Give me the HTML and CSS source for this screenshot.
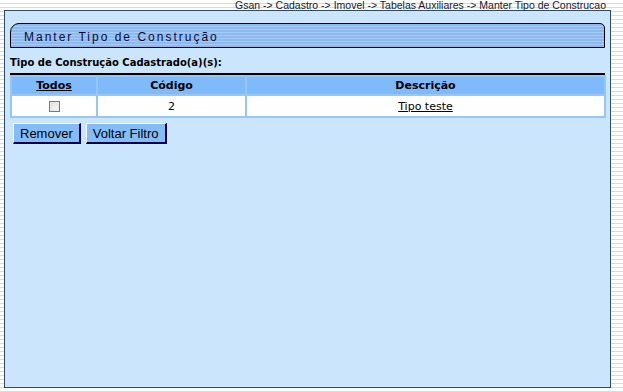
FILE: index.html
```html
<!DOCTYPE html>
<html>
<head>
<meta charset="utf-8">
<link rel="stylesheet" href="styles.css">
</head>
<body>
<div class="crumb">Gsan -&gt; Cadastro -&gt; Imovel -&gt; Tabelas Auxiliares -&gt; Manter Tipo de Construcao</div>
<div class="panel">
  <div class="titlebar"><span class="title">Manter Tipo de Construção</span></div>
  <div class="label">Tipo de Construção Cadastrado(a)(s):</div>
  <div class="rule"></div>
  <table class="grid">
    <tr class="head">
      <th class="c1"><a href="#">Todos</a></th>
      <th class="c2">Código</th>
      <th class="c3">Descrição</th>
    </tr>
    <tr class="row">
      <td><span class="check"></span></td>
      <td>2</td>
      <td><a href="#">Tipo teste</a></td>
    </tr>
  </table>
  <div class="buttons">
    <button class="btn">Remover</button>
    <button class="btn">Voltar Filtro</button>
  </div>
</div>
</body>
</html>
```
FILE: styles.css
```css
html, body {
  margin: 0;
  padding: 0;
}
body {
  width: 623px;
  height: 392px;
  overflow: hidden;
  background: repeating-linear-gradient(to bottom, #ffffff 0, #ffffff 3px, #c2e2f4 3px, #c2e2f4 4px);
  font-family: "Liberation Sans", Arial, sans-serif;
}
.crumb {
  height: 10px;
  line-height: 10px;
  font-size: 10.5px;
  text-align: right;
  padding-right: 17px;
  color: #1a1a2a;
  white-space: nowrap;
}
.panel {
  margin-left: 4px;
  width: 595px;
  height: 364px;
  border: 1px solid #2d4a66;
  background: #cbe5fd;
  padding: 12px 5px 0 5px;
}
.titlebar {
  height: 23px;
  border: 1px solid #000;
  border-radius: 9px 5px 0 0;
  background:
    repeating-linear-gradient(to bottom, #8cbaf0 0, #8cbaf0 2px, #a6cbf4 2px, #a6cbf4 3px);
  padding-left: 13px;
  display: flex;
  align-items: center;
}
.title {
  font-family: "Liberation Sans", Arial, sans-serif;
  font-size: 12px;
  letter-spacing: 2px;
  color: #0a0a3a;
  padding-top: 2px;
}
.label {
  margin-top: 7px;
  font-family: "DejaVu Sans", Verdana, sans-serif;
  font-weight: bold;
  font-size: 10px;
  height: 16px;
  line-height: 16px;
  color: #000;
}
.rule {
  margin-top: 2px;
  height: 2px;
  background: #000;
}
.grid {
  width: 596px;
  border-collapse: separate;
  border-spacing: 2px;
  background: #94c6f8;
  font-family: "DejaVu Sans", Verdana, sans-serif;
  font-size: 11px;
}
.grid th {
  background: #7fbbfa;
  height: 17px;
  padding: 0;
  font-size: 11px;
  font-weight: bold;
  color: #000;
}
.grid th a {
  color: #000;
}
.grid .c1 { width: 84px; }
.grid .c2 { width: 147px; }
.grid td {
  background: #fff;
  height: 20px;
  padding: 0;
  text-align: center;
  color: #000;
}
.grid td a {
  color: #000;
}
.check {
  display: inline-block;
  width: 9px;
  height: 9px;
  border: 1px solid #7a7a7a;
  background: linear-gradient(135deg, #dcdcdc, #fafafa);
  box-shadow: inset 0 0 0 1px #e8e8e8;
  vertical-align: middle;
}
.buttons {
  margin-top: 5px;
  margin-left: 3px;
  display: flex;
  gap: 5px;
}
.btn {
  font-family: "Liberation Sans", Arial, sans-serif;
  font-size: 13px;
  height: 21px;
  padding: 0 6px;
  background: #83bdf8;
  color: #000;
  border: 1px solid;
  border-color: #ffffff #00004a #00004a #ffffff;
  border-width: 1px 2px 2px 1px;
}
```
